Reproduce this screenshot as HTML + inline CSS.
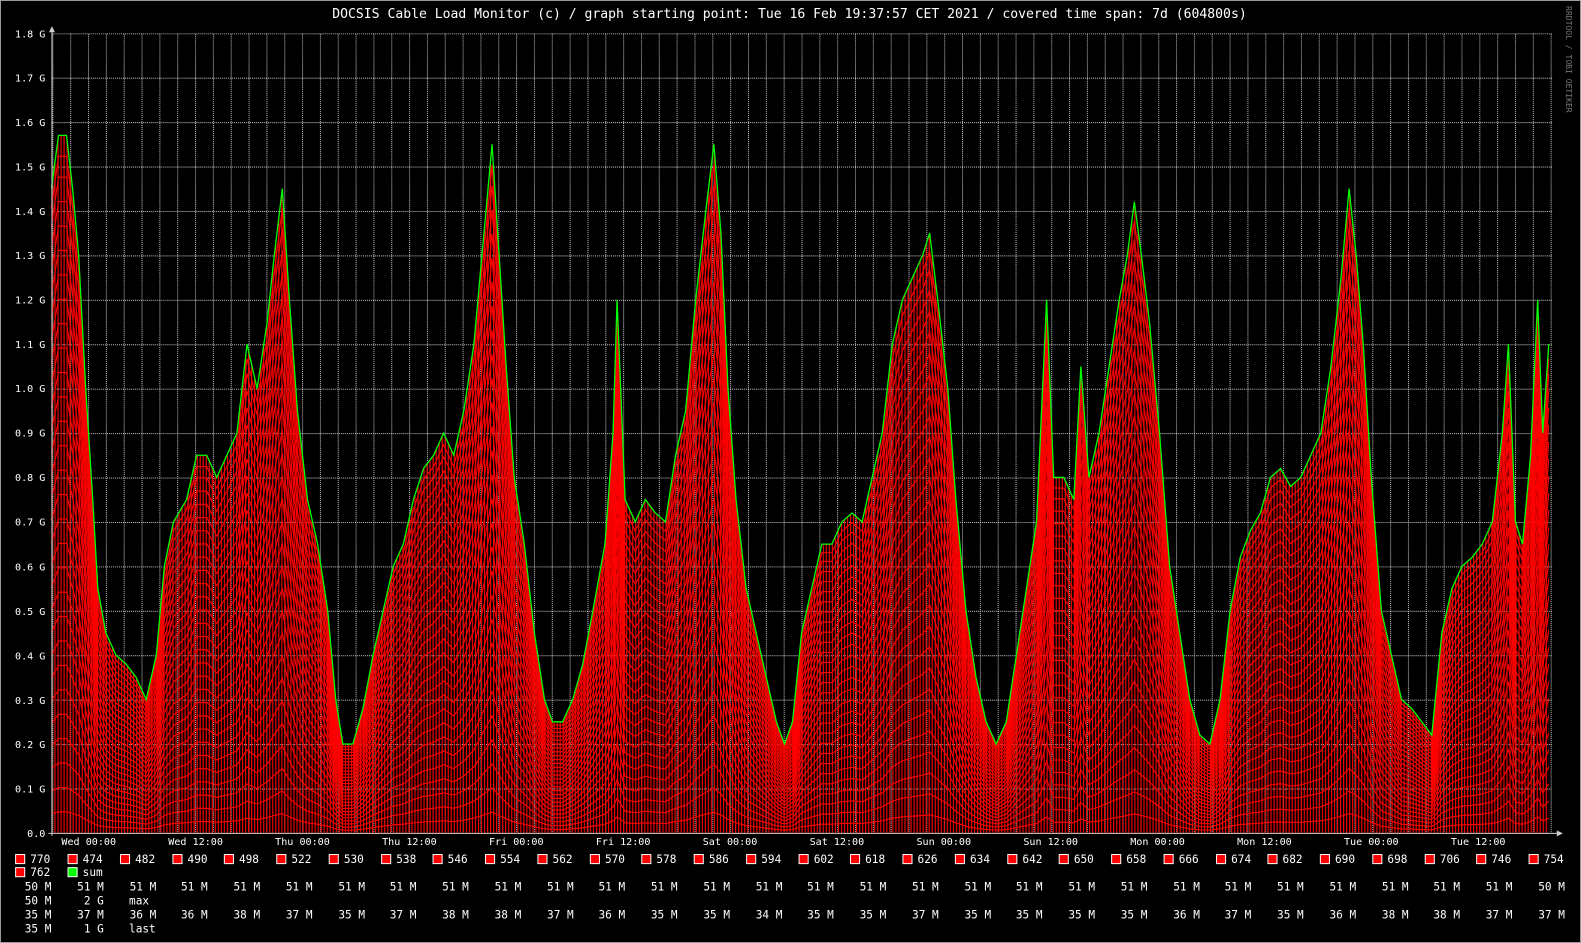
<!DOCTYPE html>
<html><head><meta charset="utf-8"><style>
html,body{margin:0;padding:0;background:#000;}
svg{display:block;}
text{font-family:"DejaVu Sans Mono","Liberation Mono",monospace;fill:#fff;}
</style></head><body>
<svg width="1581" height="943" viewBox="0 0 1581 943" xmlns="http://www.w3.org/2000/svg">
<rect x="0" y="0" width="1581" height="943" fill="#000"/>
<rect x="0.5" y="0.5" width="1580" height="942" fill="none" stroke="#9a9a9a"/>
<defs>
<pattern id="gv" patternUnits="userSpaceOnUse" x="87.3" y="0" width="17.69" height="2">
<rect x="0" y="0" width="1" height="1" fill="#c8c8c8"/>
</pattern>
<pattern id="gh" patternUnits="userSpaceOnUse" x="0" y="33" width="2" height="44.06">
<rect x="0" y="0" width="1" height="1" fill="#c8c8c8"/>
</pattern>
<pattern id="vh" patternUnits="userSpaceOnUse" x="0" y="0" width="3" height="1">
<rect x="0" y="0" width="1.1" height="1" fill="#ff0000"/>
</pattern>
<path id="c" vector-effect="non-scaling-stroke" d="M51,1.45 L58,1.57 66,1.57 72,1.45 78,1.3 85,1.0 92,0.75 97,0.55 105,0.45 115,0.4 125,0.38 135,0.35 145,0.3 155,0.4 163,0.6 172,0.7 185,0.75 195,0.85 205,0.85 215,0.8 225,0.85 235,0.9 245,1.1 255,1.0 265,1.15 272,1.3 280,1.45 287,1.2 295,0.95 305,0.75 315,0.65 325,0.5 333,0.3 340,0.2 350,0.2 360,0.28 370,0.4 380,0.5 390,0.6 400,0.65 410,0.75 420,0.82 430,0.85 440,0.9 450,0.85 460,0.95 470,1.1 478,1.3 488,1.55 495,1.3 502,1.05 510,0.8 520,0.65 530,0.45 540,0.3 548,0.25 558,0.25 568,0.3 578,0.38 588,0.5 600,0.65 608,0.9 612,1.2 620,0.75 630,0.7 640,0.75 650,0.72 660,0.7 670,0.85 680,0.95 690,1.2 700,1.4 708,1.55 715,1.35 722,1.0 730,0.75 740,0.55 750,0.45 760,0.35 770,0.25 778,0.2 786,0.25 795,0.45 805,0.55 815,0.65 825,0.65 835,0.7 845,0.72 855,0.7 865,0.8 875,0.9 885,1.1 895,1.2 905,1.25 915,1.3 922,1.35 930,1.2 940,1.0 948,0.75 958,0.5 968,0.35 978,0.25 988,0.2 998,0.25 1008,0.4 1018,0.55 1028,0.7 1038,1.2 1045,0.8 1055,0.8 1065,0.75 1072,1.05 1080,0.8 1090,0.9 1100,1.05 1110,1.2 1118,1.3 1125,1.42 1132,1.3 1140,1.15 1150,0.9 1160,0.6 1170,0.45 1180,0.3 1190,0.22 1200,0.2 1210,0.3 1220,0.5 1230,0.62 1240,0.68 1250,0.72 1260,0.8 1270,0.82 1280,0.78 1290,0.8 1300,0.85 1310,0.9 1320,1.05 1330,1.25 1338,1.45 1345,1.3 1352,1.1 1360,0.8 1370,0.5 1380,0.4 1390,0.3 1400,0.28 1410,0.25 1420,0.22 1430,0.45 1440,0.55 1450,0.6 1460,0.62 1470,0.65 1480,0.7 1490,0.9 1496,1.1 1503,0.7 1510,0.65 1518,0.85 1525,1.2 1530,0.9 1536,1.1"/>
</defs>
<g transform="scale(1.0083)">
<text x="783" y="18" font-size="13" text-anchor="middle">DOCSIS Cable Load Monitor (c) / graph starting point: Tue 16 Feb 19:37:57 CET 2021 / covered time span: 7d (604800s)</text>
<text transform="translate(1553,6) rotate(90)" font-size="8" style="fill:#777">RRDTOOL / TOBI OETIKER</text>
<rect x="52" y="33" width="1488" height="793" fill="url(#gv)"/>
<rect x="52" y="33" width="1488" height="793" fill="url(#gh)"/>
<path d="M51,0 L51,1.45 L58,1.57 66,1.57 72,1.45 78,1.3 85,1.0 92,0.75 97,0.55 105,0.45 115,0.4 125,0.38 135,0.35 145,0.3 155,0.4 163,0.6 172,0.7 185,0.75 195,0.85 205,0.85 215,0.8 225,0.85 235,0.9 245,1.1 255,1.0 265,1.15 272,1.3 280,1.45 287,1.2 295,0.95 305,0.75 315,0.65 325,0.5 333,0.3 340,0.2 350,0.2 360,0.28 370,0.4 380,0.5 390,0.6 400,0.65 410,0.75 420,0.82 430,0.85 440,0.9 450,0.85 460,0.95 470,1.1 478,1.3 488,1.55 495,1.3 502,1.05 510,0.8 520,0.65 530,0.45 540,0.3 548,0.25 558,0.25 568,0.3 578,0.38 588,0.5 600,0.65 608,0.9 612,1.2 620,0.75 630,0.7 640,0.75 650,0.72 660,0.7 670,0.85 680,0.95 690,1.2 700,1.4 708,1.55 715,1.35 722,1.0 730,0.75 740,0.55 750,0.45 760,0.35 770,0.25 778,0.2 786,0.25 795,0.45 805,0.55 815,0.65 825,0.65 835,0.7 845,0.72 855,0.7 865,0.8 875,0.9 885,1.1 895,1.2 905,1.25 915,1.3 922,1.35 930,1.2 940,1.0 948,0.75 958,0.5 968,0.35 978,0.25 988,0.2 998,0.25 1008,0.4 1018,0.55 1028,0.7 1038,1.2 1045,0.8 1055,0.8 1065,0.75 1072,1.05 1080,0.8 1090,0.9 1100,1.05 1110,1.2 1118,1.3 1125,1.42 1132,1.3 1140,1.15 1150,0.9 1160,0.6 1170,0.45 1180,0.3 1190,0.22 1200,0.2 1210,0.3 1220,0.5 1230,0.62 1240,0.68 1250,0.72 1260,0.8 1270,0.82 1280,0.78 1290,0.8 1300,0.85 1310,0.9 1320,1.05 1330,1.25 1338,1.45 1345,1.3 1352,1.1 1360,0.8 1370,0.5 1380,0.4 1390,0.3 1400,0.28 1410,0.25 1420,0.22 1430,0.45 1440,0.55 1450,0.6 1460,0.62 1470,0.65 1480,0.7 1490,0.9 1496,1.1 1503,0.7 1510,0.65 1518,0.85 1525,1.2 1530,0.9 1536,1.1 L1536,0 Z" fill="url(#vh)" transform="translate(0,826) scale(1,-440.6)"/>
<g transform="translate(0,826) scale(1,-440.6)">
<g fill="none" stroke="#ff0000" stroke-width="1.1">
<use href="#c" transform="scale(1,0.03)"/><use href="#c" transform="scale(1,0.065)"/><use href="#c" transform="scale(1,0.1)"/><use href="#c" transform="scale(1,0.135)"/><use href="#c" transform="scale(1,0.17)"/><use href="#c" transform="scale(1,0.205)"/><use href="#c" transform="scale(1,0.24)"/><use href="#c" transform="scale(1,0.275)"/><use href="#c" transform="scale(1,0.31)"/><use href="#c" transform="scale(1,0.345)"/><use href="#c" transform="scale(1,0.38)"/><use href="#c" transform="scale(1,0.415)"/><use href="#c" transform="scale(1,0.45)"/><use href="#c" transform="scale(1,0.485)"/><use href="#c" transform="scale(1,0.52)"/><use href="#c" transform="scale(1,0.555)"/><use href="#c" transform="scale(1,0.59)"/><use href="#c" transform="scale(1,0.625)"/><use href="#c" transform="scale(1,0.66)"/><use href="#c" transform="scale(1,0.695)"/><use href="#c" transform="scale(1,0.73)"/><use href="#c" transform="scale(1,0.765)"/><use href="#c" transform="scale(1,0.8)"/><use href="#c" transform="scale(1,0.835)"/><use href="#c" transform="scale(1,0.87)"/><use href="#c" transform="scale(1,0.905)"/><use href="#c" transform="scale(1,0.94)"/><use href="#c" transform="scale(1,0.97)"/>
</g>
<use href="#c" fill="none" stroke="#00ff00" stroke-width="1.3"/>
</g>
<g stroke="#cfcfcf" stroke-width="1" fill="none">
<path d="M51.5,30 V829 M48,826.5 H1545"/>
</g>
<path d="M51.5,26 L48.5,32 L54.5,32 Z M1550,826.5 L1544,823.5 L1544,829.5 Z" fill="#cfcfcf"/>
<g font-size="10" text-anchor="end">
<text x="45" y="830">0.0</text>
<text x="45" y="786">0.1 G</text><text x="45" y="742">0.2 G</text><text x="45" y="698">0.3 G</text><text x="45" y="654">0.4 G</text><text x="45" y="610">0.5 G</text><text x="45" y="566">0.6 G</text><text x="45" y="521">0.7 G</text><text x="45" y="477">0.8 G</text><text x="45" y="433">0.9 G</text><text x="45" y="389">1.0 G</text><text x="45" y="345">1.1 G</text><text x="45" y="301">1.2 G</text><text x="45" y="257">1.3 G</text><text x="45" y="213">1.4 G</text><text x="45" y="169">1.5 G</text><text x="45" y="125">1.6 G</text><text x="45" y="81">1.7 G</text><text x="45" y="37">1.8 G</text>
</g>
<g font-size="10" text-anchor="middle">
<text x="88" y="838">Wed 00:00</text><text x="194" y="838">Wed 12:00</text><text x="300" y="838">Thu 00:00</text><text x="406" y="838">Thu 12:00</text><text x="512" y="838">Fri 00:00</text><text x="618" y="838">Fri 12:00</text><text x="724" y="838">Sat 00:00</text><text x="830" y="838">Sat 12:00</text><text x="936" y="838">Sun 00:00</text><text x="1042" y="838">Sun 12:00</text><text x="1148" y="838">Mon 00:00</text><text x="1254" y="838">Mon 12:00</text><text x="1360" y="838">Tue 00:00</text><text x="1466" y="838">Tue 12:00</text>
</g>
<g font-size="11">
<g fill="#ff0000" stroke="#fff" stroke-width="1">
<rect x="15.5" y="847.5" width="9" height="9"/><rect x="67.5" y="847.5" width="9" height="9"/><rect x="119.5" y="847.5" width="9" height="9"/><rect x="171.5" y="847.5" width="9" height="9"/><rect x="222.5" y="847.5" width="9" height="9"/><rect x="274.5" y="847.5" width="9" height="9"/><rect x="326.5" y="847.5" width="9" height="9"/><rect x="378.5" y="847.5" width="9" height="9"/><rect x="429.5" y="847.5" width="9" height="9"/><rect x="481.5" y="847.5" width="9" height="9"/><rect x="533.5" y="847.5" width="9" height="9"/><rect x="585.5" y="847.5" width="9" height="9"/><rect x="636.5" y="847.5" width="9" height="9"/><rect x="688.5" y="847.5" width="9" height="9"/><rect x="740.5" y="847.5" width="9" height="9"/><rect x="792.5" y="847.5" width="9" height="9"/><rect x="843.5" y="847.5" width="9" height="9"/><rect x="895.5" y="847.5" width="9" height="9"/><rect x="947.5" y="847.5" width="9" height="9"/><rect x="999.5" y="847.5" width="9" height="9"/><rect x="1050.5" y="847.5" width="9" height="9"/><rect x="1102.5" y="847.5" width="9" height="9"/><rect x="1154.5" y="847.5" width="9" height="9"/><rect x="1206.5" y="847.5" width="9" height="9"/><rect x="1257.5" y="847.5" width="9" height="9"/><rect x="1309.5" y="847.5" width="9" height="9"/><rect x="1361.5" y="847.5" width="9" height="9"/><rect x="1413.5" y="847.5" width="9" height="9"/><rect x="1464.5" y="847.5" width="9" height="9"/><rect x="1516.5" y="847.5" width="9" height="9"/>
<rect x="15.5" y="860.5" width="9" height="9"/>
</g>
<rect x="67.5" y="860.5" width="9" height="9" fill="#00ff00" stroke="#fff"/>
<text x="30" y="856">770</text><text x="82" y="856">474</text><text x="134" y="856">482</text><text x="186" y="856">490</text><text x="237" y="856">498</text><text x="289" y="856">522</text><text x="341" y="856">530</text><text x="393" y="856">538</text><text x="444" y="856">546</text><text x="496" y="856">554</text><text x="548" y="856">562</text><text x="600" y="856">570</text><text x="651" y="856">578</text><text x="703" y="856">586</text><text x="755" y="856">594</text><text x="807" y="856">602</text><text x="858" y="856">618</text><text x="910" y="856">626</text><text x="962" y="856">634</text><text x="1014" y="856">642</text><text x="1065" y="856">650</text><text x="1117" y="856">658</text><text x="1169" y="856">666</text><text x="1221" y="856">674</text><text x="1272" y="856">682</text><text x="1324" y="856">690</text><text x="1376" y="856">698</text><text x="1428" y="856">706</text><text x="1479" y="856">746</text><text x="1531" y="856">754</text>
<text x="30" y="869">762</text><text x="82" y="869">sum</text>
<g text-anchor="end">
<text x="51" y="883">50 M</text><text x="103" y="883">51 M</text><text x="155" y="883">51 M</text><text x="206" y="883">51 M</text><text x="258" y="883">51 M</text><text x="310" y="883">51 M</text><text x="362" y="883">51 M</text><text x="413" y="883">51 M</text><text x="465" y="883">51 M</text><text x="517" y="883">51 M</text><text x="569" y="883">51 M</text><text x="620" y="883">51 M</text><text x="672" y="883">51 M</text><text x="724" y="883">51 M</text><text x="776" y="883">51 M</text><text x="827" y="883">51 M</text><text x="879" y="883">51 M</text><text x="931" y="883">51 M</text><text x="983" y="883">51 M</text><text x="1034" y="883">51 M</text><text x="1086" y="883">51 M</text><text x="1138" y="883">51 M</text><text x="1190" y="883">51 M</text><text x="1241" y="883">51 M</text><text x="1293" y="883">51 M</text><text x="1345" y="883">51 M</text><text x="1397" y="883">51 M</text><text x="1448" y="883">51 M</text><text x="1500" y="883">51 M</text><text x="1552" y="883">50 M</text>
<text x="51" y="897">50 M</text><text x="103" y="897">2 G</text>
<text x="51" y="911">35 M</text><text x="103" y="911">37 M</text><text x="155" y="911">36 M</text><text x="206" y="911">36 M</text><text x="258" y="911">38 M</text><text x="310" y="911">37 M</text><text x="362" y="911">35 M</text><text x="413" y="911">37 M</text><text x="465" y="911">38 M</text><text x="517" y="911">38 M</text><text x="569" y="911">37 M</text><text x="620" y="911">36 M</text><text x="672" y="911">35 M</text><text x="724" y="911">35 M</text><text x="776" y="911">34 M</text><text x="827" y="911">35 M</text><text x="879" y="911">35 M</text><text x="931" y="911">37 M</text><text x="983" y="911">35 M</text><text x="1034" y="911">35 M</text><text x="1086" y="911">35 M</text><text x="1138" y="911">35 M</text><text x="1190" y="911">36 M</text><text x="1241" y="911">37 M</text><text x="1293" y="911">35 M</text><text x="1345" y="911">36 M</text><text x="1397" y="911">38 M</text><text x="1448" y="911">38 M</text><text x="1500" y="911">37 M</text><text x="1552" y="911">37 M</text>
<text x="51" y="925">35 M</text><text x="103" y="925">1 G</text>
</g>
<text x="128" y="897">max</text>
<text x="128" y="925">last</text>
</g>
</g>
</svg>
</body></html>
